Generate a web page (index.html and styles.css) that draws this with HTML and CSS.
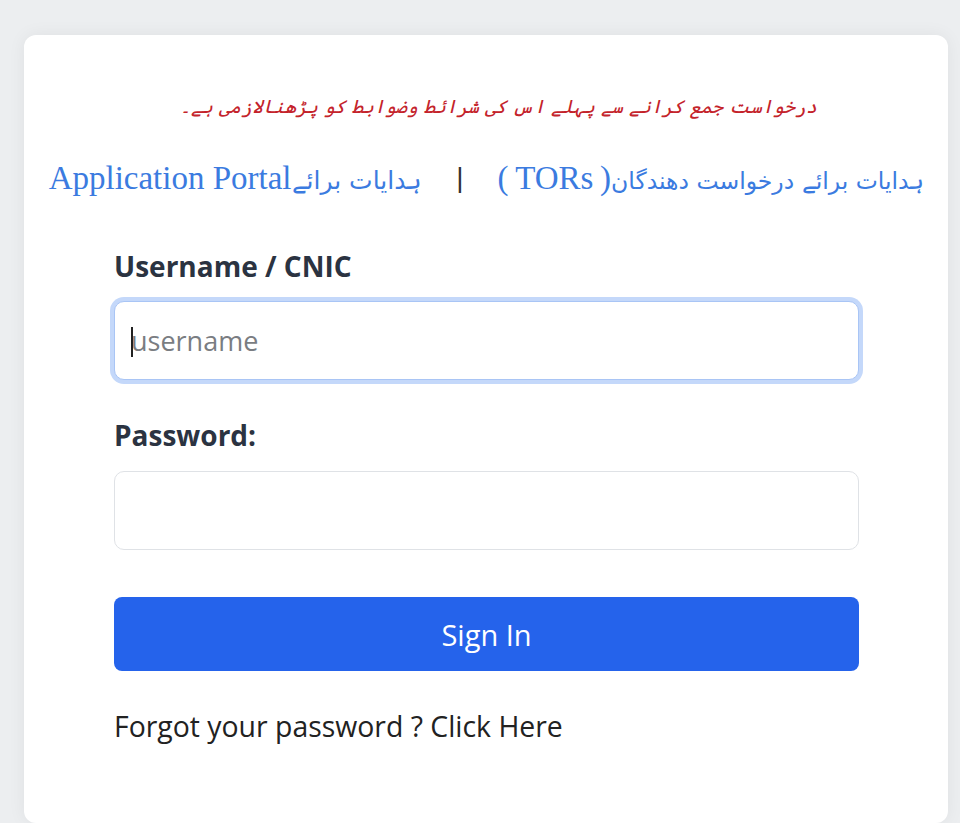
FILE: index.html
```html
<!DOCTYPE html>
<html lang="en">
<head>
<meta charset="utf-8">
<title>Sign In</title>
<link rel="stylesheet" href="styles.css">
</head>
<body>
<main class="card">
  <p class="notice" dir="rtl">درخواست جمع کرانے سے پہلے اس کی شرائط وضوابط کو پڑھنالازمی ہے۔</p>
  <p class="links" dir="rtl">
    <a href="#" class="link">ہدایات برائے درخواست دھندگان<span class="latin">(&#8201;TORs&#8201;)</span></a>
    <span class="sep">|</span>
    <a href="#" class="link link-left">ہدایات برائے<span class="latin">Application Portal</span></a>
  </p>
  <form class="form">
    <label class="label" for="u">Username / CNIC</label>
    <div class="field">
      <input id="u" class="input input-focus" type="text" placeholder="username">
      <span class="caret"></span>
    </div>
    <label class="label label-pw" for="p">Password:</label>
    <input id="p" class="input input-pw" type="password">
    <button type="button" class="btn">Sign In</button>
    <p class="forgot">Forgot your password ? Click Here</p>
  </form>
</main>
</body>
</html>
```
FILE: styles.css
```css
html, body {
  margin: 0;
  padding: 0;
}
body {
  background: #eceef0;
  padding: 35px 12px 0 24px;
  font-family: "Open Sans", "Noto Sans", sans-serif;
  height: 823px;
  box-sizing: border-box;
  overflow: hidden;
}
.card {
  background: #ffffff;
  border-radius: 12px;
  box-shadow: 0 0 18px rgba(0, 0, 0, 0.06);
  height: 788px;
  padding: 52px 89px 0 90px;
  box-sizing: border-box;
}
.notice {
  margin: 0 -80px;
  padding-left: 24px;
  text-align: center;
  font-family: "DejaVu Sans", sans-serif;
  font-size: 18.6px;
  line-height: 40px;
  height: 40px;
  color: #c4232b;
  font-style: italic;
}
.links {
  margin: 29px -90px 0 -90px;
  height: 44px;
  line-height: 44px;
  text-align: center;
  display: flex;
  justify-content: center;
  gap: 34px;
  white-space: nowrap;
}
.link {
  color: #3b7be0;
  text-decoration: none;
  font-family: "DejaVu Sans", sans-serif;
  font-size: 23.5px;
}
.link-left {
  font-size: 25px;
}
.latin {
  font-family: "Liberation Serif", serif;
  font-size: 33px;
}
.sep {
  font-family: "Liberation Sans", sans-serif;
  font-size: 28px;
  color: #333;
}
.form {
  display: flex;
  flex-direction: column;
  margin-top: 50px;
}
.label {
  font-size: 28px;
  line-height: 32px;
  font-weight: 700;
  color: #2b3341;
  margin-bottom: 19px;
}
.label-pw {
  margin-top: 39px;
  margin-bottom: 20px;
}
.field {
  position: relative;
  display: flex;
  flex-direction: column;
}
.input {
  height: 79px;
  box-sizing: border-box;
  border: 1px solid #dfe2e6;
  border-radius: 10px;
  padding: 0 16px;
  font-family: "Open Sans", "Noto Sans", sans-serif;
  font-size: 27px;
  color: #222;
  outline: none;
  background: #fff;
}
.input::placeholder {
  color: #7a7d82;
}
.input-focus {
  border-color: #a9c5f5;
  box-shadow: 0 0 0 4px #c4d8fa;
}
.caret {
  position: absolute;
  left: 17px;
  top: 26px;
  width: 1.5px;
  height: 30px;
  background: #222;
}
.btn {
  margin-top: 47px;
  height: 74px;
  border: none;
  border-radius: 8px;
  background: #2563eb;
  color: #fff;
  font-family: "Open Sans", "Noto Sans", sans-serif;
  font-size: 29px;
  cursor: pointer;
}
.forgot {
  margin: 37px 0 0;
  font-size: 28.4px;
  line-height: 36px;
  color: #222;
}
```
